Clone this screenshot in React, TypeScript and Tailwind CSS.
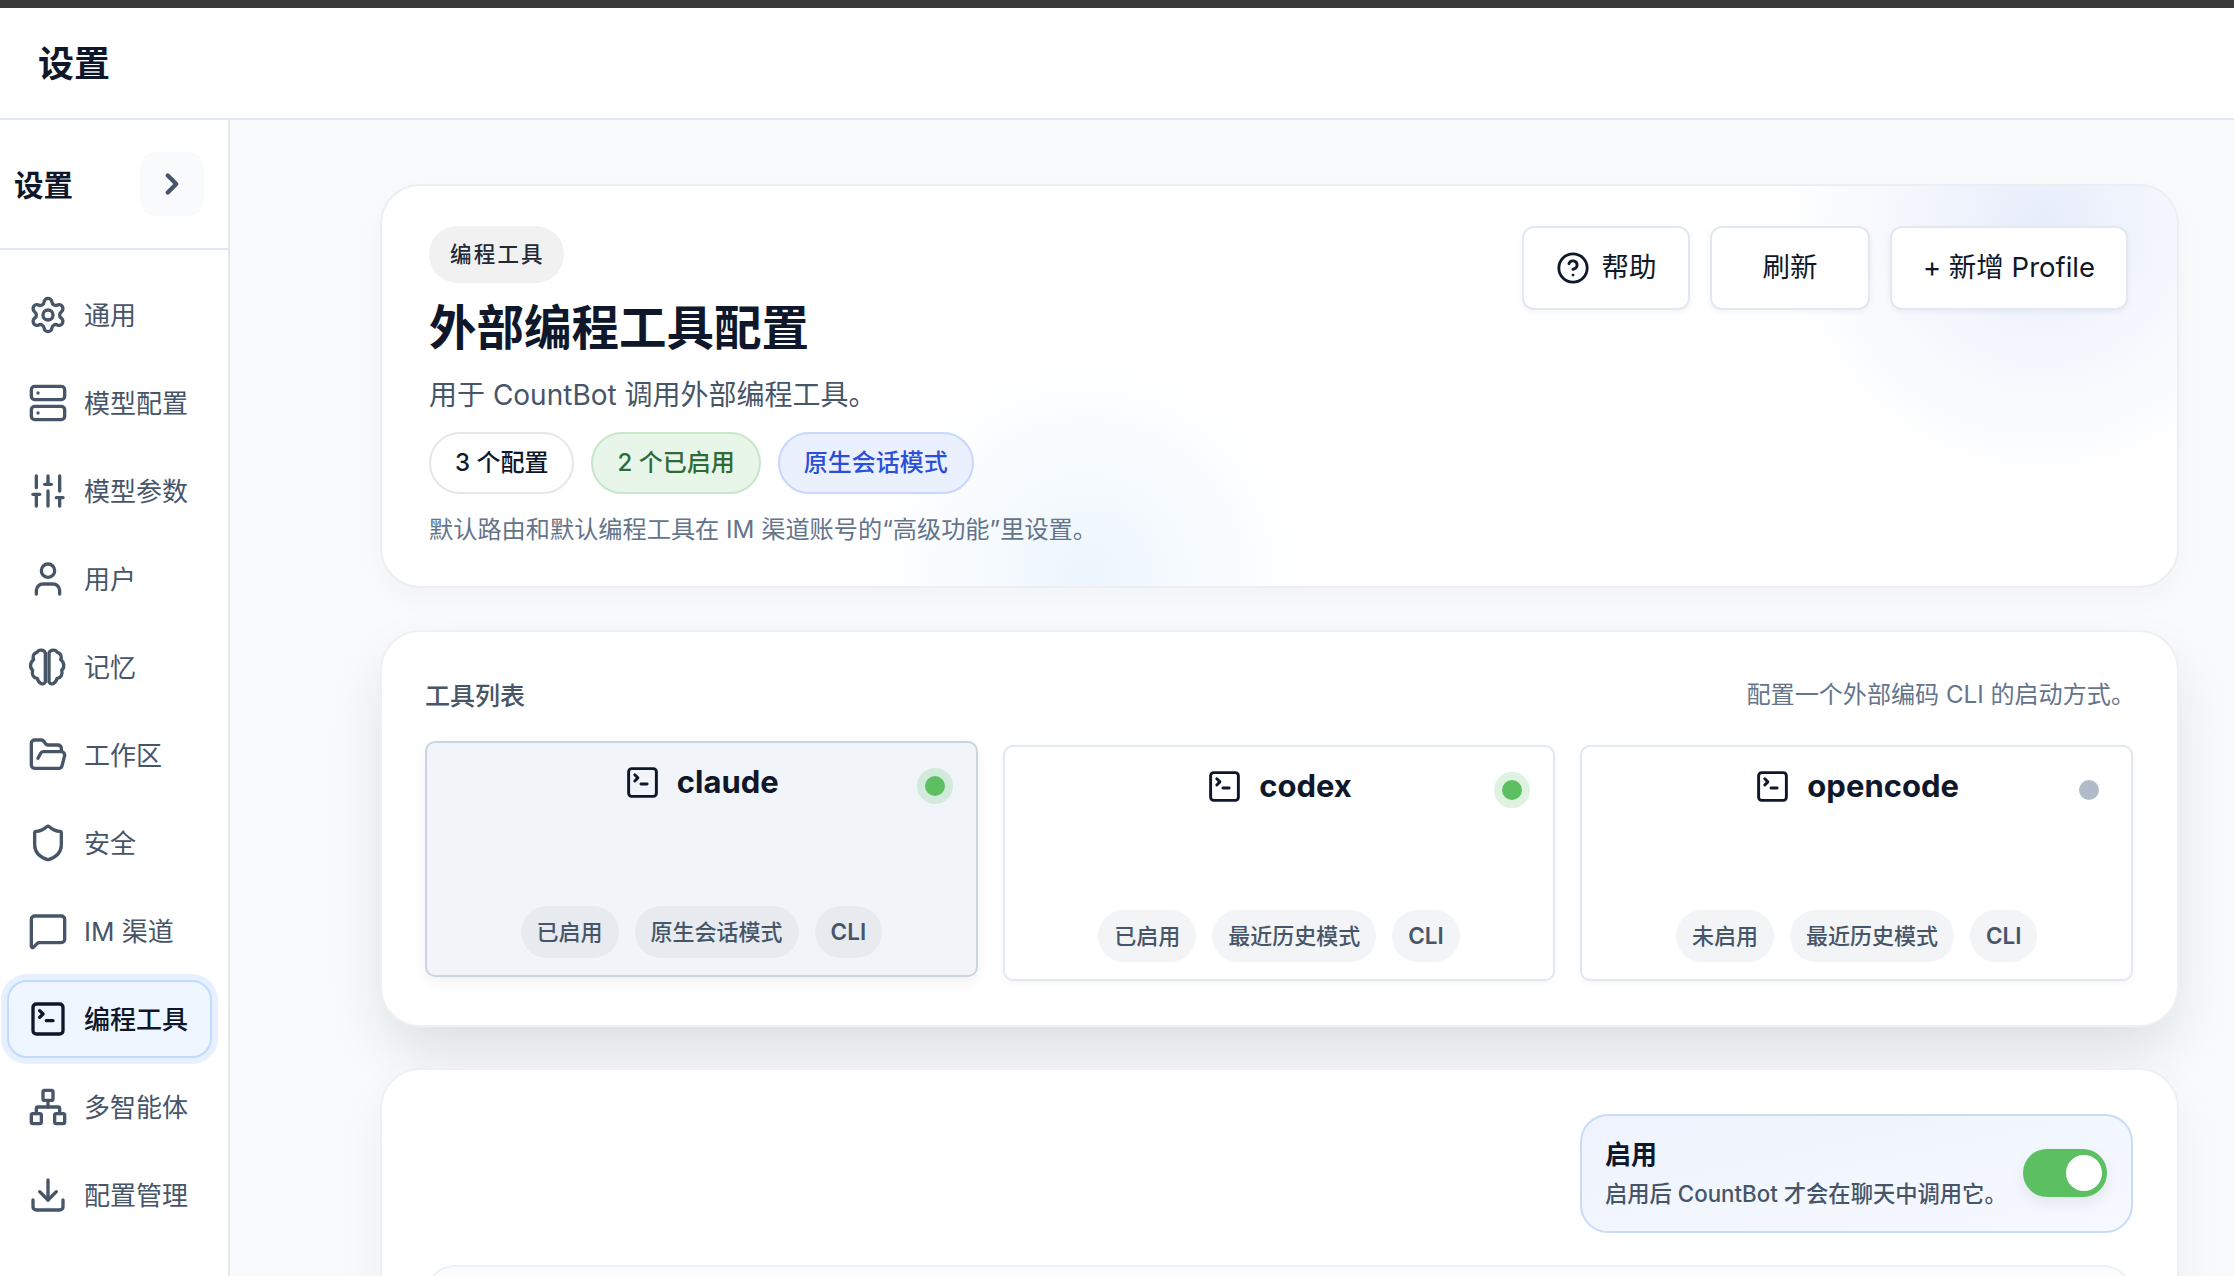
import {
  ChevronRight,
  CircleHelp,
  Download,
  FolderOpen,
  MessageSquare,
  Network,
  Server,
  Settings,
  Shield,
  SlidersVertical,
  SquareTerminal,
  User,
} from "lucide-react"

function BrainIcon({ size, strokeWidth, className }: { size: number; strokeWidth: number; className?: string }) {
  return (
    <svg
      width={size}
      height={size}
      viewBox="0 0 24 24"
      fill="none"
      stroke="currentColor"
      strokeWidth={strokeWidth}
      strokeLinecap="round"
      strokeLinejoin="round"
      className={className}
    >
      <path d="M10.4 3.5C9.5 1.5 6.5 1.2 5.5 3.2C3.2 3.6 2.6 6 3.4 7.6C1.2 9 .9 12.5 2.8 14C2 16.5 3.2 18.6 5.6 18.8C6.2 21.8 9.2 23.2 10.4 21Z" />
      <path d="M12.6 3.5C13.5 1.5 16.5 1.2 17.5 3.2C19.8 3.6 20.4 6 19.6 7.6C21.8 9 22.1 12.5 20.2 14C21 16.5 19.8 18.6 17.4 18.8C16.8 21.8 13.8 23.2 12.6 21Z" />
    </svg>
  )
}

const navItems = [
  { label: "通用", icon: Settings },
  { label: "模型配置", icon: Server },
  { label: "模型参数", icon: SlidersVertical },
  { label: "用户", icon: User },
  { label: "记忆", icon: BrainIcon },
  { label: "工作区", icon: FolderOpen },
  { label: "安全", icon: Shield },
  { label: "IM 渠道", icon: MessageSquare },
  { label: "编程工具", icon: SquareTerminal, active: true },
  { label: "多智能体", icon: Network },
  { label: "配置管理", icon: Download },
]

const tools = [
  { name: "claude", status: "已启用", mode: "原生会话模式", on: true, selected: true },
  { name: "codex", status: "已启用", mode: "最近历史模式", on: true, selected: false },
  { name: "opencode", status: "未启用", mode: "最近历史模式", on: false, selected: false },
]

function Sidebar() {
  return (
    <aside className="flex w-[230px] shrink-0 flex-col border-r-2 border-[#e2e8f0] bg-white">
      <div className="flex h-[130px] shrink-0 items-center justify-between border-b-2 border-[#e2e8f0] pr-[24px] pl-[14px]">
        <span className="pt-[3px] text-[29.5px] font-bold text-[#0f172a]">设置</span>
        <button className="flex h-[64px] w-[64px] items-center justify-center rounded-[16px] bg-[#f8fafc] text-[#475569]">
          <ChevronRight size={34} strokeWidth={3} />
        </button>
      </div>
      <nav className="flex flex-col gap-[10px] pt-[26px] pr-[16px] pl-[7px]">
        {navItems.map((item) => (
          <div
            key={item.label}
            className={
              item.active
                ? "flex h-[78px] items-center gap-[16px] rounded-[20px] border-2 border-[#bfdbfe] bg-[#eff6ff] pl-[19px] text-[#0f172a] ring-[6px] ring-[#e7f0fe]"
                : "flex h-[78px] items-center gap-[16px] rounded-[20px] border-2 border-transparent pl-[19px] text-[#475569]"
            }
          >
            <item.icon size={40} strokeWidth={2} className="shrink-0" />
            <span className={item.active ? "text-[26px] font-medium" : "text-[26px]"}>{item.label}</span>
          </div>
        ))}
      </nav>
    </aside>
  )
}

function Hero() {
  return (
    <section className="flex h-[404px] shrink-0 items-start justify-between rounded-[40px] border-2 border-[#eceef2] bg-white bg-[radial-gradient(circle_at_1660px_36px,#e7edfb_0,#f3f6fd_120px,rgba(255,255,255,0)_265px),radial-gradient(circle_at_705px_390px,#edf6fd_0,rgba(255,255,255,0)_220px)] pt-[40px] pr-[49px] pl-[47px] shadow-[0_10px_30px_rgba(15,23,42,0.03)]">
      <div className="flex flex-col items-start">
        <span className="flex h-[57px] items-center rounded-full bg-[#f1f1f2] pr-[19px] pl-[21px] text-[21.5px] font-medium tracking-[2.2px] text-[#1f2937]">
          编程工具
        </span>
        <h1 className="mt-[15px] text-[47.5px] leading-[60px] font-bold text-[#0f172a]">外部编程工具配置</h1>
        <p className="mt-[17px] text-[28px] leading-[40px] text-[#475569]">用于 CountBot 调用外部编程工具。</p>
        <div className="mt-[17px] flex gap-[17px]">
          <span className="flex h-[62px] items-center rounded-full border-2 border-[#e5e7eb] bg-white px-[24px] text-[24px] font-medium text-[#0f172a]">
            3 个配置
          </span>
          <span className="flex h-[62px] items-center rounded-full border-2 border-[#c8e6c9] bg-[#e8f5e9] px-[24px] text-[24px] font-medium text-[#2e6b35]">
            2 个已启用
          </span>
          <span className="flex h-[62px] items-center rounded-full border-2 border-[#c7d7fe] bg-[#eaf0fe] px-[24px] text-[24px] font-medium text-[#2b4fd8]">
            原生会话模式
          </span>
        </div>
        <p className="mt-[19px] text-[24.2px] leading-[34px] text-[#64748b]">
          默认路由和默认编程工具在 IM 渠道账号的“高级功能”里设置。
        </p>
      </div>
      <div className="flex gap-[20px]">
        <button className="flex h-[84px] w-[168px] items-center justify-center gap-[12px] rounded-[12px] border-2 border-[#e2e8f0] bg-white text-[27.5px] text-[#0f172a] shadow-[0_2px_6px_rgba(15,23,42,0.05)]">
          <CircleHelp size={34} strokeWidth={2} />
          帮助
        </button>
        <button className="flex h-[84px] w-[160px] items-center justify-center rounded-[12px] border-2 border-[#e2e8f0] bg-white text-[27.5px] text-[#0f172a] shadow-[0_2px_6px_rgba(15,23,42,0.05)]">
          刷新
        </button>
        <button className="flex h-[84px] w-[238px] items-center justify-center rounded-[12px] border-2 border-[#e2e8f0] bg-white text-[27.5px] text-[#0f172a] shadow-[0_2px_6px_rgba(15,23,42,0.05)]">
          + 新增 Profile
        </button>
      </div>
    </section>
  )
}

function ToolCard({ tool }: { tool: (typeof tools)[number] }) {
  const tagClass = tool.selected
    ? "flex h-[52px] items-center rounded-full bg-[#e7ebef] px-[16px] text-[22px] font-medium text-[#475569]"
    : "flex h-[52px] items-center rounded-full bg-[#f3f4f6] px-[16px] text-[22px] font-medium text-[#475569]"
  const cliClass = tool.selected
    ? "flex h-[52px] items-center rounded-full bg-[#e7ebef] px-[16px] text-[22.5px] font-semibold text-[#475569]"
    : "flex h-[52px] items-center rounded-full bg-[#f3f4f6] px-[16px] text-[22.5px] font-semibold text-[#475569]"
  return (
    <div
      className={
        tool.selected
          ? "relative flex h-[236px] -translate-y-[4px] flex-col items-center justify-between rounded-[10px] border-2 border-[#cbd5e1] bg-[#f1f5f9] pt-[17px] pb-[17px] shadow-[0_6px_14px_rgba(15,23,42,0.05)]"
          : "relative flex h-[236px] flex-col items-center justify-between rounded-[10px] border-2 border-[#e2e8f0] bg-white pt-[17px] pb-[17px] shadow-[0_2px_6px_rgba(15,23,42,0.04)]"
      }
    >
      <div className="flex items-center gap-[16px] text-[#0f172a]">
        <SquareTerminal size={37} strokeWidth={1.9} />
        <span className="text-[31px] leading-[44px] font-bold">{tool.name}</span>
      </div>
      <span
        className={
          tool.on
            ? "absolute top-[33px] right-[31px] h-[20px] w-[20px] rounded-full bg-[#5cc063] ring-[8px] ring-[#5cc063]/20"
            : "absolute top-[33px] right-[32px] h-[20px] w-[20px] rounded-full bg-[#b0bac9]"
        }
      />
      <div className="flex gap-[16px]">
        <span className={tagClass}>{tool.status}</span>
        <span className={tagClass}>{tool.mode}</span>
        <span className={cliClass}>CLI</span>
      </div>
    </div>
  )
}

function ToolList() {
  return (
    <section className="mt-[42px] h-[397px] shrink-0 rounded-[40px] border-2 border-[#eef0f3] bg-white pt-[48px] pr-[44px] pl-[43px] shadow-[0_28px_60px_-8px_rgba(15,23,42,0.13)]">
      <div className="flex h-[34px] items-center justify-between">
        <span className="text-[25px] font-medium text-[#475569]">工具列表</span>
        <span className="-mr-[2px] mb-[4px] text-[24.1px] text-[#64748b]">配置一个外部编码 CLI 的启动方式。</span>
      </div>
      <div className="mt-[31px] grid grid-cols-3 gap-[25px]">
        {tools.map((tool) => (
          <ToolCard key={tool.name} tool={tool} />
        ))}
      </div>
    </section>
  )
}

function Detail() {
  return (
    <section className="mt-[41px] flex shrink-0 flex-col rounded-t-[40px] border-2 border-[#eef0f3] bg-white pt-[44px] pr-[44px] pl-[43px] shadow-[0_20px_50px_rgba(15,23,42,0.05)]">
      <div className="flex justify-end">
        <div className="flex h-[119px] w-[553px] items-center justify-between rounded-[28px] border-2 border-[#c8dcf8] bg-gradient-to-br from-[#eef3fd] to-[#f6f9fe] pr-[24px] pl-[23px]">
          <div>
            <div className="-mt-[2px] text-[26px] leading-[36px] font-semibold text-[#0f172a]">启用</div>
            <div className="mt-[6px] text-[22.3px] leading-[30px] font-medium text-[#475569]">启用后 CountBot 才会在聊天中调用它。</div>
          </div>
          <span className="mb-[2px] flex h-[48px] w-[84px] items-center justify-end rounded-full bg-[#5cc063] pr-[5px] shadow-[0_6px_14px_rgba(15,23,42,0.08)]">
            <span className="h-[36px] w-[36px] rounded-full bg-white" />
          </span>
        </div>
      </div>
      <div className="mt-[32px] h-[120px] rounded-[30px] border-2 border-[#eef0f3] bg-[#fbfcfd]" />
    </section>
  )
}

export default function App() {
  return (
    <div className="flex h-screen w-full flex-col overflow-hidden bg-white font-['Inter','Noto_Sans_CJK_SC',sans-serif]">
      <div className="h-[8px] shrink-0 bg-[#3a3a3a]" />
      <header className="flex h-[112px] shrink-0 items-center border-b-2 border-[#e2e8f0] pl-[38px]">
        <span className="pt-[2px] text-[36px] font-semibold text-[#0f172a]">设置</span>
      </header>
      <div className="flex min-h-0 flex-1">
        <Sidebar />
        <main className="flex min-w-0 flex-1 flex-col overflow-hidden bg-[#f8fafc] pt-[64px] pr-[55px] pl-[150px]">
          <Hero />
          <ToolList />
          <Detail />
        </main>
      </div>
    </div>
  )
}
